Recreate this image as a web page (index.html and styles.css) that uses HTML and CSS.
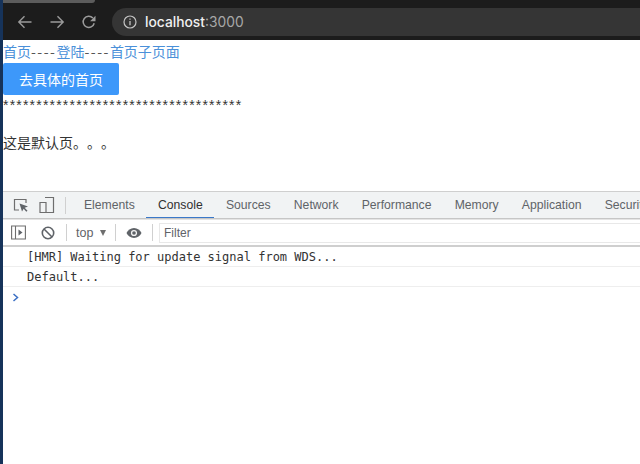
FILE: index.html
```html
<!DOCTYPE html>
<html lang="zh">
<head>
<meta charset="utf-8">
<title>localhost:3000</title>
<link rel="stylesheet" href="styles.css">
</head>
<body>
<div class="desk"></div>
<div class="window">
  <header class="chrome">
    <div class="tabedge"></div>
    <div class="navrow">
      <svg class="nav" width="16" height="16" viewBox="0 0 16 16"><path d="M14.5 8H2M7.5 2.200 1.800 8l5.700 5.800" fill="none" stroke="#9b9b9b" stroke-width="1.400"/></svg>
      <svg class="nav" width="16" height="16" viewBox="0 0 16 16"><path d="M1.500 8H14M8.500 2.200 14.200 8l-5.700 5.800" fill="none" stroke="#9b9b9b" stroke-width="1.400"/></svg>
      <svg class="nav" width="16" height="16" viewBox="0 0 16 16"><path d="M13.200 9.200A5.600 5.600 0 1 1 11.900 4" fill="none" stroke="#9b9b9b" stroke-width="1.500"/><path d="M14.500 1.800v5.400H9.100z" fill="#9b9b9b"/></svg>
      <div class="omnibox">
        <svg width="14" height="14" viewBox="0 0 14 14"><circle cx="7" cy="7" r="6" fill="none" stroke="#c4c4c4" stroke-width="1.200"/><path d="M7 6v4.200M7 3.400v1.400" stroke="#c4c4c4" stroke-width="1.300"/></svg>
        <span class="url"><b>localhost</b>:3000</span>
      </div>
    </div>
  </header>
  <main class="page">
    <div class="links"><a href="#">首页</a><span class="dash">----</span><a href="#">登陆</a><span class="dash">----</span><a href="#">首页子页面</a></div>
    <button class="btn">去具体的首页</button>
    <div class="stars">************************************</div>
    <p class="default">这是默认页。。。</p>
  </main>
  <section class="devtools">
    <div class="tabs">
      <div class="tabicons">
        <svg width="16" height="16" viewBox="0 0 16 16"><path d="M6 13H1.500V2.500H13V6" fill="none" stroke="#6e6e6e" stroke-width="1.200"/><path d="M6.500 6.500 15 9.500l-3.300 1.200 2.800 3-1.200 1-2.600-3-1.700 2.800z" fill="#5f6368"/></svg>
        <svg width="16" height="18" viewBox="0 0 16 18"><path d="M6 1.500h8.500v15H7M1 6.500h6v10H1z" fill="none" stroke="#6e6e6e" stroke-width="1.200"/></svg>
      </div>
      <span class="sep"></span>
      <span class="tab">Elements</span>
      <span class="tab active">Console</span>
      <span class="tab">Sources</span>
      <span class="tab">Network</span>
      <span class="tab">Performance</span>
      <span class="tab">Memory</span>
      <span class="tab">Application</span>
      <span class="tab">Security</span>
    </div>
    <div class="filterbar">
      <svg class="drawer" width="15" height="15" viewBox="0 0 15 15"><path d="M.6 1h13.800v13H.6zM4.500 1v13" fill="none" stroke="#6e6e6e" stroke-width="1.100"/><path d="M7.500 4.500 11.500 7.500l-4 3z" fill="#5f6368"/></svg>
      <svg class="block" width="14" height="14" viewBox="0 0 14 14"><circle cx="7" cy="7" r="5.700" fill="none" stroke="#5f6368" stroke-width="1.600"/><path d="M3 3l8 8" stroke="#5f6368" stroke-width="1.600"/></svg>
      <span class="sep"></span>
      <span class="context">top<i class="caret"></i></span>
      <span class="sep"></span>
      <svg class="eye" width="16" height="12" viewBox="0 0 16 12"><path d="M8 1C4.500 1 1.800 3.200.5 6c1.300 2.800 4 5 7.500 5s6.200-2.200 7.500-5C14.200 3.200 11.500 1 8 1z" fill="#5f6368"/><circle cx="8" cy="6" r="3.100" fill="#f3f3f3"/><circle cx="8" cy="6" r="1.800" fill="#5f6368"/></svg>
      <span class="sep"></span>
      <div class="filter">Filter</div>
    </div>
    <div class="log">[HMR] Waiting for update signal from WDS...</div>
    <div class="log">Default...</div>
    <div class="prompt"><svg width="7" height="9" viewBox="0 0 7 9"><path d="M1.500 1 5.500 4.500 1.500 8" fill="none" stroke="#3a6fc4" stroke-width="1.500"/></svg></div>
  </section>
</div>
</body>
</html>
```
FILE: styles.css
```css
* { box-sizing: border-box; }
html, body { margin: 0; height: 100%; overflow: hidden; }
body { display: flex; width: 640px; height: 464px; background: #fff; font-family: "Noto Sans CJK SC", "Liberation Sans", sans-serif; text-spacing-trim: space-all; }
.desk { width: 3px; flex: none; background: #16335a; }
.window { flex: 1; min-width: 0; display: flex; flex-direction: column; }
.chrome { height: 40px; flex: none; background: #1c1c1c; }
.tabedge { width: 92px; height: 3px; background: #5c5c5c; border-bottom-right-radius: 5px; }
.navrow { display: flex; align-items: center; height: 37px; padding-left: 14px; }
.nav { margin-right: 16px; flex: none; }
.nav:nth-child(3) { margin-right: 15px; }
.omnibox { flex: 1; height: 28px; margin-top: 1px; padding-left: 11px; display: flex; align-items: center; gap: 8px; background: #353535; border-radius: 14px 0 0 14px; }
.url { font: 13.800px "Inter", "Liberation Sans", sans-serif; color: #a8a8a8; }
.url b { font-weight: 500; color: #f0f0f0; }
.page { height: 151px; flex: none; overflow: hidden; font-size: 14px; color: #333; }
.links { height: 23px; line-height: 23px; color: #555; }
.links a { color: #4a90d9; text-decoration: none; }
.dash { letter-spacing: 1.500px; }
.btn { display: block; width: 116px; height: 32px; margin: 0; padding: 0; border: 0; border-radius: 2px; background: #3d98fa; color: #fff; font: 14px "Noto Sans CJK SC", sans-serif; }
.stars { height: 18px; font: 14px/20px "Liberation Sans", sans-serif; letter-spacing: 1.200px; color: #333; }
.default { margin: 19px 0 0; line-height: 20px; }
.devtools { flex: 1; min-height: 0; overflow: hidden; font-family: "Liberation Sans", sans-serif; }
.tabs { height: 28px; display: flex; align-items: center; background: #f1f3f4; border-top: 1px solid #cfcfcf; border-bottom: 1px solid #c6c6c6; white-space: nowrap; font-size: 12.200px; color: #5f6368; overflow: hidden; }
.tabicons { display: flex; align-items: center; gap: 10px; margin-left: 10px; width: 42px; flex: none; }
.sep { width: 1px; height: 17px; background: #d0d0d0; flex: none; }
.tabs .sep { margin-left: 10px; margin-right: 6.400px; }
.tab { flex: none; height: 27px; line-height: 26px; padding: 0 11.600px; }
.tab.active { color: #303030; border-bottom: 2px solid #3a78c9; }
.filterbar { height: 28px; display: flex; align-items: center; background: #fff; border-top: 1px solid #e4e4e4; border-bottom: 2px solid #cfcfcf; font-size: 12px; color: #5f6368; }
.drawer { margin-left: 8px; flex: none; }
.block { margin-left: 15px; margin-right: 11px; flex: none; }
.context { margin: 0 8px 0 9px; width: 31px; display: flex; align-items: center; gap: 7px; flex: none; font-size: 12.500px; }
.caret { width: 0; height: 0; border: 3.500px solid transparent; border-top: 6px solid #6e6e6e; border-bottom: 0; }
.eye { margin: 0 10px; flex: none; }
.filter { flex: 1; height: 20px; margin-left: 6px; padding-left: 4px; line-height: 18px; background: #fff; border: 1px solid #e8e8e8; border-right: 0; color: #5f6368; }
.log { height: 20px; padding-left: 24px; border-bottom: 1px solid #eee; font: 12px/20px "DejaVu Sans Mono", "Liberation Mono", monospace; color: #333; }
.prompt { height: 20px; padding-left: 9px; display: flex; align-items: center; }
```
